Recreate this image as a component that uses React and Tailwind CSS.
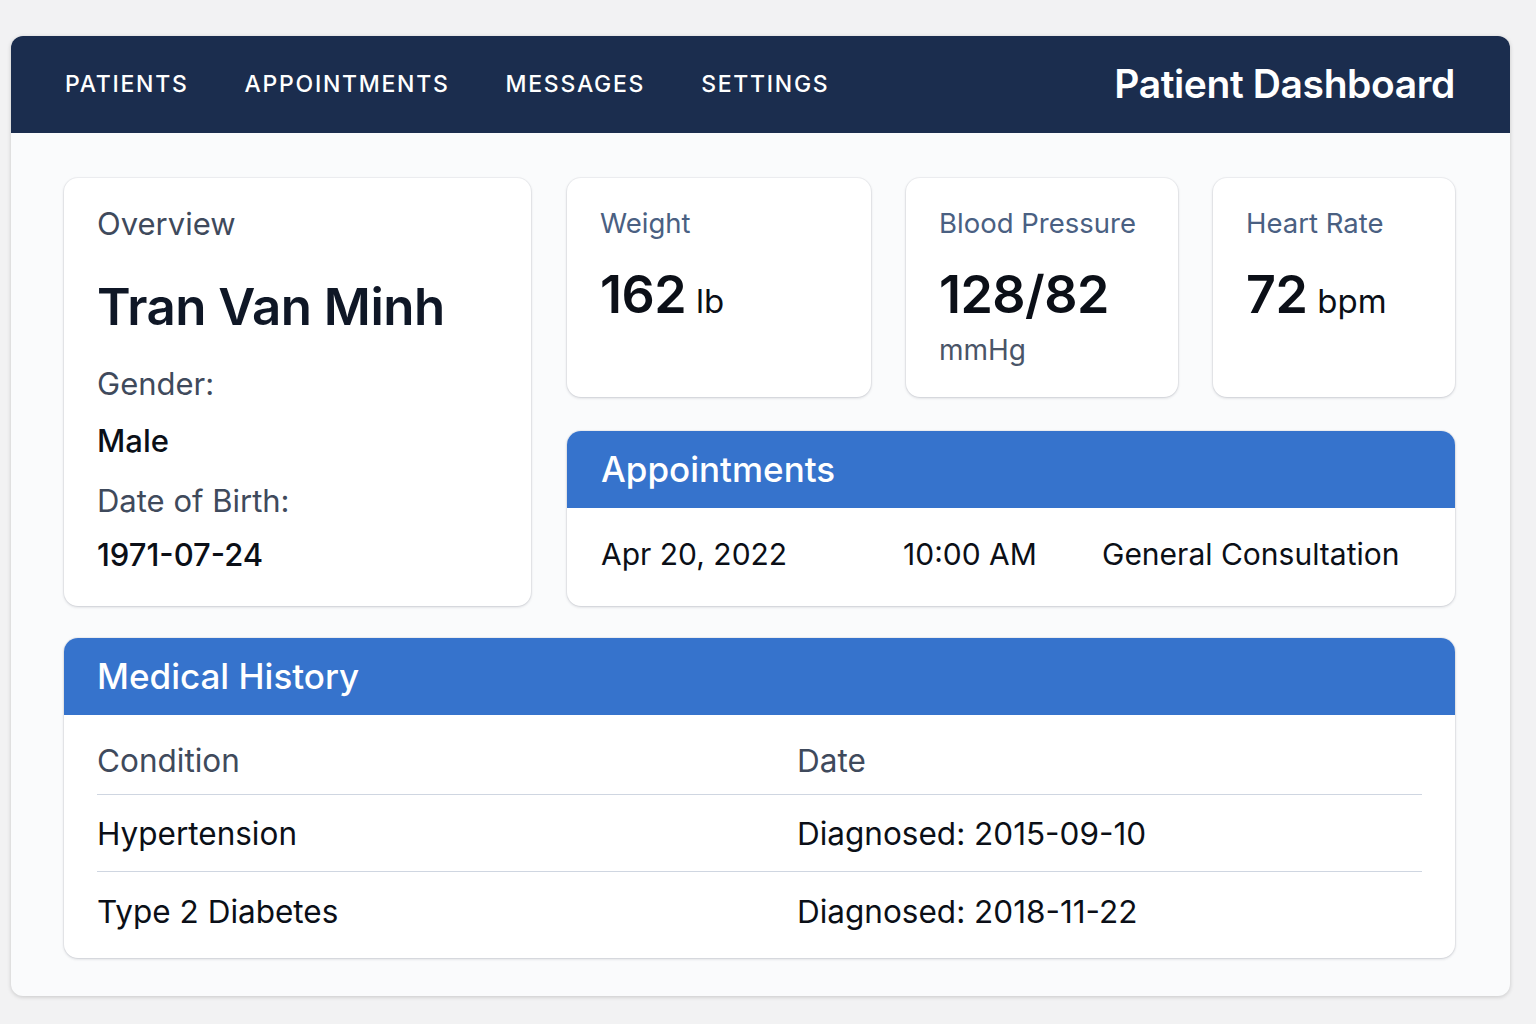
import React from "react";

const nav = ["PATIENTS", "APPOINTMENTS", "MESSAGES", "SETTINGS"];

const vitals = [
  { label: "Weight", value: "162", unit: "lb", w: "w-[304px]" },
  { label: "Blood Pressure", value: "128/82", sub: "mmHg", w: "w-[272px]" },
  { label: "Heart Rate", value: "72", unit: "bpm", w: "w-[242px]" },
];

const history = [
  { condition: "Hypertension", date: "Diagnosed: 2015-09-10" },
  { condition: "Type 2 Diabetes", date: "Diagnosed: 2018-11-22" },
];

const card = "bg-white rounded-[14px] shadow-[0_1px_3px_rgba(15,23,42,0.18),0_0_0_1px_rgba(15,23,42,0.04)]";

export default function App() {
  return (
    <div className="min-h-[1024px] bg-[#f2f2f3] pt-[36px] pl-[11px] font-['Inter','Noto_Sans',sans-serif]">
      <div className="w-[1499px] rounded-[12px] bg-[#fafbfc] shadow-[0_1px_4px_rgba(0,0,0,0.18)] overflow-hidden">
        {/* top bar */}
        <div className="h-[97px] bg-[#1b2d4e] flex items-center justify-between pl-[54px] pr-[55px]">
          <nav className="flex items-center gap-[56px]">
            {nav.map((n) => (
              <span key={n} className="text-white text-[23px] font-medium tracking-[0.075em]">
                {n}
              </span>
            ))}
          </nav>
          <h1 className="text-white text-[39px] font-semibold tracking-[-0.01em]">Patient Dashboard</h1>
        </div>

        <div className="pt-[45px] pl-[53px] pr-[55px] pb-[38px] flex flex-col gap-[32px]">
          <div className="flex gap-[36px]">
            {/* overview */}
            <div className={`${card} w-[467px] h-[428px] px-[33px] pt-[26px]`}>
              <p className="text-[31px] text-[#3f4a5c] leading-[40px]">Overview</p>
              <p className="text-[51px] font-semibold text-[#0f1726] leading-[64px] mt-[31px] tracking-[-0.01em]">Tran Van Minh</p>
              <p className="text-[31px] text-[#3f4a5c] leading-[40px] mt-[25px]">Gender:</p>
              <p className="text-[31px] font-medium text-[#0b0f17] leading-[40px] mt-[17px]">Male</p>
              <p className="text-[31px] text-[#3f4a5c] leading-[40px] mt-[20px]">Date of Birth:</p>
              <p className="text-[31px] font-medium text-[#0b0f17] leading-[40px] mt-[14px]">1971-07-24</p>
            </div>

            <div className="flex flex-col gap-[34px]">
              <div className="flex gap-[35px]">
                {vitals.map((v) => (
                  <div key={v.label} className={`${card} ${v.w} h-[219px] px-[33px] pt-[28px]`}>
                    <p className="text-[27.5px] text-[#4a6082] leading-[34px]">{v.label}</p>
                    <p className="mt-[25px] leading-[60px] text-[#0b0f17]">
                      <span className="text-[52px] font-semibold tracking-[-0.01em]">{v.value}</span>
                      {v.unit && <span className="text-[33px] ml-[10px]">{v.unit}</span>}
                    </p>
                    {v.sub && <p className="text-[28px] text-[#4a5568] leading-[34px] mt-[-4px]">{v.sub}</p>}
                  </div>
                ))}
              </div>

              {/* appointments */}
              <div className={`${card} w-[888px] h-[175px] overflow-hidden`}>
                <div className="h-[77px] bg-[#3673cc] flex items-center px-[34px]">
                  <h2 className="text-white text-[35px] font-medium">Appointments</h2>
                </div>
                <div className="flex items-center h-[92px] px-[34px] text-[30px] text-[#0b0f17]">
                  <span className="w-[302px]">Apr 20, 2022</span>
                  <span className="w-[199px]">10:00 AM</span>
                  <span>General Consultation</span>
                </div>
              </div>
            </div>
          </div>

          {/* medical history */}
          <div className={`${card} h-[320px] overflow-hidden`}>
            <div className="h-[77px] bg-[#3673cc] flex items-center px-[33px]">
              <h2 className="text-white text-[35px] font-medium">Medical History</h2>
            </div>
            <div className="px-[33px] pt-[2px]">
              <div className="grid grid-cols-[700px_1fr] h-[78px] pt-[10px] items-center border-b border-[#cfd6e1] text-[31.5px] text-[#3f4a5c]">
                <span>Condition</span>
                <span>Date</span>
              </div>
              {history.map((h, i) => (
                <div
                  key={h.condition}
                  className={`grid grid-cols-[700px_1fr] h-[77px] pt-[2px] items-center text-[31.5px] text-[#0b0f17] ${i === 0 ? "border-b border-[#cfd6e1]" : ""}`}
                >
                  <span>{h.condition}</span>
                  <span>{h.date}</span>
                </div>
              ))}
            </div>
          </div>
        </div>
      </div>
    </div>
  );
}
